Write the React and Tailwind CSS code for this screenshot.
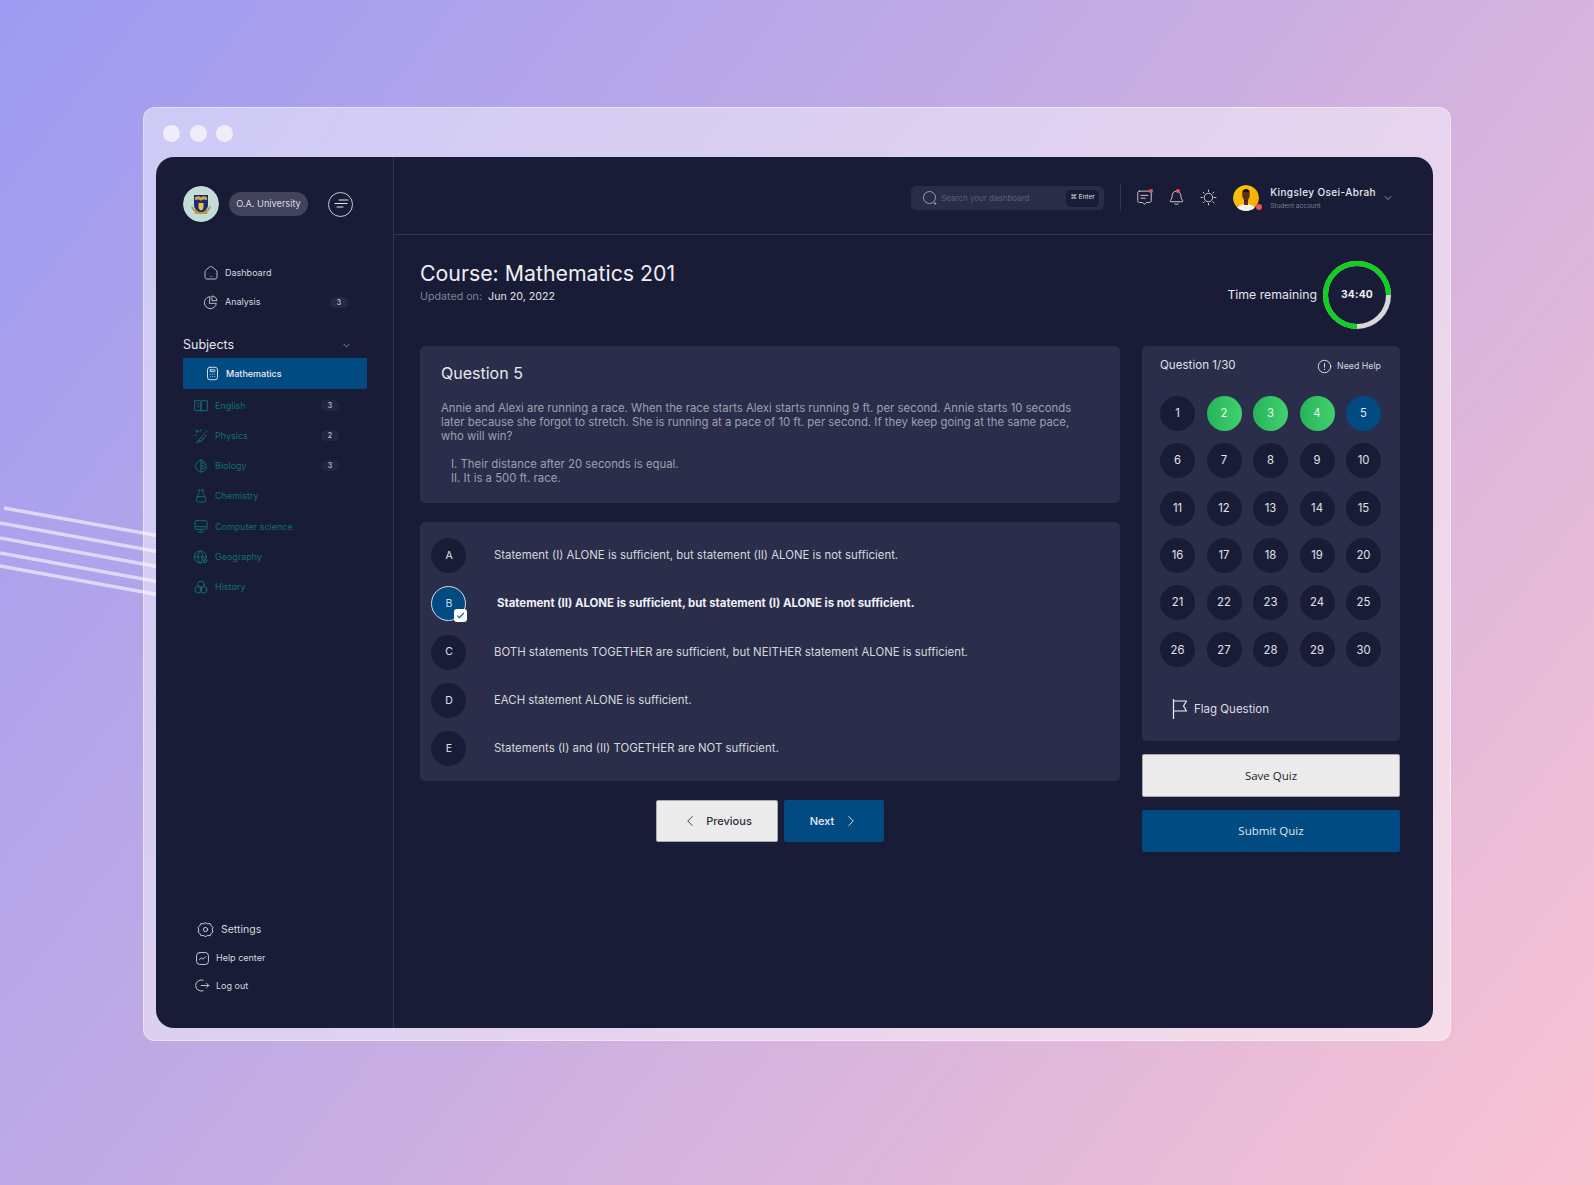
import React from "react";
import { ChevronDown, ChevronLeft, ChevronRight } from "lucide-react";

const S = ({ size = 14, className = "", children, vb = 24, sw = 1.5 }) => (
  <svg width={size} height={size} viewBox={`0 0 ${vb} ${vb}`} fill="none" stroke="currentColor" strokeWidth={sw} strokeLinecap="round" strokeLinejoin="round" className={`shrink-0 ${className}`}>
    {children}
  </svg>
);

const subjects = [
  ["English", 3, <><path d="M3 4h8c.7 0 1 .5 1 1v15c0-.6-.4-1-1-1H3z" /><path d="M21 4h-8c-.7 0-1 .5-1 1v15c0-.6.4-1 1-1h8z" /><path d="M6 9h3M6 13h3" /></>],
  ["Physics", 2, <><path d="M6 21 17 9l3 3-9 9-5 0z" /><path d="M9 18l3 2M12 14l3 3" /><circle cx="6" cy="5" r="1.6" /><circle cx="11" cy="3.500" r=".8" /><path d="M3 11h2M21 4l-3 3" /></>],
  ["Biology", 3, <><path d="M12 3c5 2 8 5 8 9 0 5-4 9-8 9s-8-4-8-9c0-4 3-7 8-9z" /><path d="M12 3v18M12 9l4-2M12 13l6-3M12 17l6-3" /></>],
  ["Chemistry", null, <><path d="M8 3h8M9 3v4c0 2-3 3-3 6M15 3v4c0 2 3 3 3 6" /><rect x="5" y="13" width="14" height="8" rx="3" /></>],
  ["Computer science", null, <><rect x="3" y="4" width="18" height="13" rx="2" /><path d="M3 13h18M12 17v3M8 21h8" /></>],
  ["Geography", null, <><circle cx="11" cy="12" r="9" /><path d="M2 12h18M11 3c-5 5-5 13 0 18M11 3c5 5 5 13 0 18" /><circle cx="18" cy="18" r="2.5" /></>],
  ["History", null, <><circle cx="12" cy="8" r="5" /><circle cx="8" cy="16" r="5" /><circle cx="16" cy="16" r="5" /></>],
];

const answers = [
  ["A", "Statement (I) ALONE is sufficient, but statement (II) ALONE is not sufficient."],
  ["B", "Statement (II) ALONE is sufficient, but statement (I) ALONE is not sufficient."],
  ["C", "BOTH statements TOGETHER are sufficient, but NEITHER statement ALONE is sufficient."],
  ["D", "EACH statement ALONE is sufficient."],
  ["E", "Statements (I) and (II) TOGETHER are NOT sufficient."],
];

function Crest() {
  return (
    <svg width="36" height="36" viewBox="0 0 36 36" className="rounded-full shrink-0">
      <circle cx="18" cy="18" r="18" fill="#c4dcd8" />
      <path d="M8 20c.5 3 2 5 4 6l6 1.500 6-1.500c2-1 3.500-3 4-6l-2.200 1c-.8 2-1.800 2.800-3.300 3H13.500c-1.500-.2-2.500-1-3.300-3z" fill="#b59a45" />
      <path d="M11 9h14v10c0 4-3.500 6.500-7 7.500-3.500-1-7-3.500-7-7.500z" fill="#1c2a78" />
      <path d="M12 11.500c2-1.700 4.500-1.700 6 0 1.500-1.700 4-1.700 6 0v2.700c-2-1-4.500-1-6 .8-1.500-1.800-4-1.800-6-.8z" fill="#d9a93c" />
      <path d="M15.500 17h5v4c0 1.800-1 2.800-2.500 3.500-1.500-.7-2.500-1.700-2.500-3.500z" fill="#f0c23a" />
      <rect x="11.500" y="26" width="13" height="2" rx="1" fill="#b59a45" />
    </svg>
  );
}

function Avatar() {
  return (
    <div className="relative w-[26px] h-[26px] shrink-0">
      <svg width="26" height="26" viewBox="0 0 26 26" className="rounded-full">
        <defs>
          <linearGradient id="av" x1="0" y1="0" x2="1" y2="1">
            <stop offset="0" stopColor="#fdc60f" />
            <stop offset="1" stopColor="#f6a800" />
          </linearGradient>
        </defs>
        <circle cx="13" cy="13" r="13" fill="url(#av)" />
        <path d="M3 26c1-5 5-7 10-7s9 2 10 7z" fill="#f4f1ee" />
        <rect x="11" y="14" width="4" height="6" fill="#5a2f1c" />
        <ellipse cx="13" cy="10" rx="3.8" ry="5.2" fill="#5f3119" />
        <path d="M9.3 8c0-3 1.5-4 3.7-4s3.700 1 3.700 4c-1-1.500-6.400-1.500-7.400 0z" fill="#1e120c" />
        <path d="M10.500 13.500c1 2.500 4 2.500 5 0l-.5 1.500-2 1.200-2-1.200z" fill="#1e120c" />
      </svg>
      <span className="absolute right-[-3px] bottom-[1px] w-[6px] h-[6px] rounded-full bg-[#ef4e5c]" />
    </div>
  );
}

function Badge({ n, className = "" }) {
  return <span className={`flex items-center justify-center w-[18px] h-[11px] rounded-full bg-[#252a3f] text-[7px] leading-none font-medium text-[#c4c6d0] ${className}`}>{n}</span>;
}

function Sidebar() {
  return (
    <aside className="w-[238px] shrink-0 h-full border-r border-[#33364f] pt-[29px] pl-[27px] flex flex-col">
      <div className="flex items-center h-[36px]">
        <Crest />
        <span className="ml-[10px] flex items-center justify-center w-[79px] h-[24px] rounded-full bg-[#40435a] text-[9.200px] text-[#dcdde3]">O.A. University</span>
        <span className="ml-[20px] flex items-center justify-center w-[25px] h-[25px] rounded-full border border-[#c9cad2] text-[#e6e6ea]">
          <svg width="16" height="10" viewBox="0 0 16 10" fill="none" stroke="currentColor" strokeWidth="1" strokeLinecap="round"><path d="M6 1h9M2 4.500h12M4 8h6" /></svg>
        </span>
      </div>

      <div className="mt-[36px] ml-[20px] flex items-center h-[30px] text-[9px] text-[#d7d8de]">
        <S size={16} className="mr-[6px] text-[#c6c7cf]" sw={1.4}><path d="M3 11c0-2 1-3 2-4l5-4c1-.8 3-.8 4 0l5 4c1 1 2 2 2 4v7c0 2-1 3-3 3H6c-2 0-3-1-3-3z" /><path d="M12 17v.5" /></S>
        Dashboard
      </div>
      <div className="ml-[20px] flex items-center h-[28px] w-[145px] text-[9px] text-[#d7d8de]">
        <S size={16} className="mr-[6px] text-[#c6c7cf]" sw={1.4}><path d="M10 4a9 9 0 1 0 10 10H10z" /><path d="M14 3a8 8 0 0 1 7 7h-7z" /></S>
        Analysis
        <Badge n={3} className="ml-auto" />
      </div>

      <div className="mt-[17px] flex items-center w-[184px] h-[25px] pr-[15px] text-[12.500px] text-[#e4e5ea]">
        Subjects
        <ChevronDown size={11} strokeWidth={1.5} className="ml-auto text-[#b5b6c0]" />
      </div>
      <div className="flex items-center w-[184px] h-[31px] pl-[22px] bg-[#024a82] rounded-[1px] text-[9px] font-medium text-[#e9edf3]">
        <S size={15} className="mr-[6px] text-[#dfe6ee]" sw={1.5}><rect x="4" y="2" width="16" height="20" rx="4" /><rect x="8" y="6" width="8" height="3" rx="1" /><path d="M8.500 13h.01M12 13h.01M15.500 13h.01M8.500 17h.01M12 17h.01M15.500 17h.01" /></S>
        Mathematics
      </div>
      <div className="mt-[1.500px]">
        {subjects.map(([name, n, icon]) => (
          <div key={name} className="flex items-center w-[156px] h-[30.200px] pl-[10px] text-[9px] text-[#0e7075]">
            <S size={16} className="mr-[6px] text-[#0e7075]" sw={1.4}>{icon}</S>
            {name}
            {n && <Badge n={n} className="ml-auto bg-[#20283f]" />}
          </div>
        ))}
      </div>

      <div className="mt-auto mb-[29px] ml-[14px]">
        <div className="flex items-center h-[30px] pt-[1px] text-[10.500px] text-[#d7d8de]">
          <S size={17} className="mr-[7px] text-[#d0d1d8]" sw={1.4}><circle cx="12" cy="12" r="3" /><path d="M12 2.500l3 1.500 3.500-.5 1.500 3 2.500 2.500-1 3.500 1 3-2.500 2-1.500 3.200-3.500-.2-3 1.500-3-1.500-3.500.2-1.500-3.200-2.500-2 1-3-1-3.500 2.500-2.500 1.500-3 3.500.5z" /></S>
          Settings
        </div>
        <div className="flex items-center h-[28px] text-[9px] text-[#d7d8de] -ml-[2px]">
          <S size={15} className="mr-[6px] text-[#d0d1d8]" sw={1.5}><rect x="2.500" y="2.500" width="19" height="19" rx="5" /><path d="M7 14l3-3 3 2 4-4" /></S>
          Help center
        </div>
        <div className="flex items-center h-[27px] text-[9px] text-[#d7d8de] -ml-[2px]">
          <S size={15} className="mr-[6px] text-[#d0d1d8]" sw={1.5}><path d="M13 3.500a9 9 0 1 0 0 17" /><path d="M10 12h12M18.500 8.500l3.500 3.500-3.500 3.500" /></S>
          Log out
        </div>
      </div>
    </aside>
  );
}

function TopBar() {
  return (
    <header className="h-[78px] border-b border-[#33364f] flex items-start justify-end pt-[27px] pr-[39px] shrink-0">
      <div className="mt-[2px] w-[193px] h-[24px] rounded-[5px] bg-[#292d48] flex items-center pl-[11px] pr-[5px]">
        <svg width="16" height="16" viewBox="0 0 16 16" fill="none" stroke="#9a9cab" strokeWidth="1"><circle cx="7.500" cy="7.500" r="6" /><circle cx="13" cy="13.500" r=".8" fill="#9a9cab" /></svg>
        <span className="ml-[3px] text-[8px] text-[#5d6076]">Search your dashboard</span>
        <span className="ml-auto flex items-center justify-center w-[33px] h-[17px] rounded-[5px] bg-[#191c37] text-[6.500px] font-medium text-[#c5c6d0]">⌘ Enter</span>
      </div>
      <div className="ml-[16px] w-px h-[27px] bg-[#33364f]" />
      <div className="relative ml-[15px] mt-[5px] text-[#c8c9d1]">
        <S size={17} sw={1.4}><path d="M5 3h14c1.500 0 2.500 1 2.500 2.500v11c0 1.500-1 2.500-2.500 2.500h-4l-3 2.500L9 19H5c-1.500 0-2.500-1-2.500-2.500v-11C2.500 4 3.500 3 5 3z" /><path d="M7 9h10M7 13h6" /></S>
        <span className="absolute top-0 right-0 w-[4px] h-[4px] rounded-full bg-[#ef4e5c]" />
      </div>
      <div className="relative ml-[15px] mt-[5px] text-[#c8c9d1]">
        <S size={17} sw={1.4}><path d="M12 3c-4 0-6 3-6 6 0 5-3 7-3 8 0 .6.500 1 1 1h16c.5 0 1-.4 1-1 0-1-3-3-3-8 0-3-2-6-6-6z" /><path d="M9.500 21c1.500 1 3.500 1 5 0" /></S>
        <span className="absolute top-0 right-[5px] w-[4px] h-[4px] rounded-full bg-[#ef4e5c]" />
      </div>
      <div className="ml-[15px] mt-[5px] text-[#c8c9d1]">
        <S size={17} sw={1.4}><circle cx="12" cy="12" r="6" /><path d="M12 1.500v2M12 20.500v2M1.500 12h2M20.500 12h2M4.500 4.500 6 6M18 18l1.500 1.500M4.500 19.500 6 18M18 6l1.500-1.500" /></S>
      </div>
      <div className="ml-[16px] mt-[1px]"><Avatar /></div>
      <div className="ml-[11px] mt-[1px] leading-none">
        <div className="text-[10px] leading-[14px] font-medium tracking-[0.4px] text-[#e9e9ee]">Kingsley Osei-Abrah</div>
        <div className="text-[6.500px] leading-[9px] mt-[3px] text-[#7d7f91]">Student account</div>
      </div>
      <ChevronDown size={12} strokeWidth={1.5} className="ml-[6px] mt-[8px] text-[#bfc0c9]" />
    </header>
  );
}

function Grid() {
  const cells = Array.from({ length: 30 }, (_, i) => i + 1);
  return (
    <div className="mt-[21px] ml-[18px] grid grid-cols-[repeat(5,35px)] gap-x-[11.500px] gap-y-[12.300px]">
      {cells.map((n) => {
        const tone =
          n >= 2 && n <= 4
            ? "bg-gradient-to-r from-[#26b45a] to-[#41d16f] text-[#ecfbf1]"
            : n === 5
            ? "bg-[#024a82] text-[#dfe8f1]"
            : "bg-[#191c37] text-[#e2e3e9]";
        return (
          <div key={n} className={`w-[35px] h-[35px] rounded-full flex items-center justify-center text-[11.300px] ${tone}`}>{n}</div>
        );
      })}
    </div>
  );
}

function QuizPanel() {
  return (
    <div className="w-[258px] shrink-0">
      <div className="h-[395px] rounded-[5px] bg-[#2a2e4b] pt-[11px]">
        <div className="flex items-center justify-between h-[18px] pl-[18px] pr-[19px]">
          <span className="text-[11.600px] text-[#dfe0e6]">Question 1/30</span>
          <span className="flex items-center text-[8.800px] text-[#d3d4db]">
            <S size={15} className="mr-[5px] text-[#e2e3e8]" sw={1.5}><circle cx="12" cy="12" r="10" /><path d="M12 7v6M12 16.500v.5" /></S>
            Need Help
          </span>
        </div>
        <Grid />
        <div className="mt-[32px] ml-[30px] flex items-center h-[20px] text-[11.500px] text-[#dcdde3]">
          <svg width="16" height="20" viewBox="0 0 16 20" fill="none" stroke="#eeeef2" strokeWidth="1.200" className="mr-[6px]"><path d="M1.500 0v20M1.500 2h13l-3 5 3 5h-13" strokeLinejoin="round" /></svg>
          Flag Question
        </div>
      </div>
      <button className="mt-[13px] w-full h-[43px] bg-[#ebebeb] rounded-[2px] border border-[#a9a9b4] text-[11.500px] text-[#22242f]" style={{ fontFamily: "Open Sans, sans-serif" }}>Save Quiz</button>
      <button className="mt-[13px] w-full h-[42px] bg-[#024a82] rounded-[2px] text-[11.500px] text-[#dfe8f1]" style={{ fontFamily: "Open Sans, sans-serif" }}>Submit Quiz</button>
    </div>
  );
}

function Main() {
  return (
    <main className="flex-1 min-w-0 flex flex-col">
      <TopBar />
      <div className="pl-[26px] pt-[25px] flex-1">
        <div className="flex items-start justify-between h-[86px] pr-[42px]">
          <div>
            <h1 className="text-[21.300px] leading-[27px] text-[#eeeef2]">Course: Mathematics 201</h1>
            <p className="text-[10.700px] leading-[14px] mt-[3px] text-[#7f8194]">Updated on: <span className="ml-[3px] text-[#e0e1e6]">Jun 20, 2022</span></p>
          </div>
          <div className="flex items-center mt-[1px]">
            <span className="text-[12.300px] text-[#e4e5ea] mr-[6px]">Time remaining</span>
            <div className="relative w-[68px] h-[68px]">
              <svg width="68" height="68" viewBox="0 0 68 68" fill="none" strokeWidth="5">
                <circle cx="34" cy="34" r="31.500" stroke="#d8d8d8" />
                <path d="M65.500 34A31.500 31.500 0 1 0 34 65.500" stroke="#10cf1f" />
              </svg>
              <span className="absolute inset-0 flex items-center justify-center text-[10.300px] font-bold text-[#eeeef2] tracking-[0.2px]">34:40</span>
            </div>
          </div>
        </div>
        <div className="flex gap-[22px] items-start">
          <div className="w-[700px] shrink-0">
            <section className="h-[157px] rounded-[5px] bg-[#2a2e4b] pt-[17px] pl-[21px] pr-[30px]">
              <h2 className="text-[16px] leading-[21px] text-[#e8e9ee]">Question 5</h2>
              <p className="mt-[17px] text-[11.350px] leading-[14px] text-[#9ea0b0]">Annie and Alexi are running a race. When the race starts Alexi starts running 9 ft. per second. Annie starts 10 seconds later because she forgot to stretch. She is running at a pace of 10 ft. per second. If they keep going at the same pace, who will win?</p>
              <p className="mt-[14px] pl-[10px] text-[11.350px] leading-[14px] text-[#9ea0b0]">I. Their distance after 20 seconds is equal.<br />II. It is a 500 ft. race.</p>
            </section>
            <section className="mt-[19px] h-[259px] rounded-[5px] bg-[#2a2e4b] pt-[16px] pl-[11px] flex flex-col gap-[13.300px]">
              {answers.map(([l, t]) => {
                const sel = l === "B";
                return (
                  <div key={l} className="flex items-center h-[35px]">
                    <div className={`relative w-[35px] h-[35px] shrink-0 rounded-full flex items-center justify-center pl-[1px] text-[10.500px] ${sel ? "bg-[#024a82] border border-[#d5dae3] text-[#cfdae6]" : "bg-[#191c37] text-[#e2e3e9]"}`}>
                      {l}
                      {sel && (
                        <span className="absolute -right-[2px] -bottom-[2px] w-[13px] h-[13px] rounded-[3px] bg-white flex items-center justify-center text-[#2a5f95]">
                          <S size={9} sw={3}><path d="M4 13l5 5 11-12" /></S>
                        </span>
                      )}
                    </div>
                    <span className={sel ? "ml-[31px] text-[11.400px] font-bold text-[#f0f0f4]" : "ml-[28px] text-[11.400px] text-[#d6d7de]"}>{t}</span>
                  </div>
                );
              })}
            </section>
            <div className="mt-[19px] flex justify-center gap-[6px] pr-[1px]">
              <button className="w-[122px] h-[42px] rounded-[2px] bg-[#ebebeb] border border-[#a9a9b4] flex items-center justify-center text-[11px] font-medium text-[#2c2e3d]">
                <ChevronLeft size={18} strokeWidth={1.2} className="mr-[7px]" />Previous
              </button>
              <button className="w-[100px] h-[42px] rounded-[2px] bg-[#024a82] flex items-center justify-center pl-[3px] text-[11px] font-medium text-[#e9edf3]">
                Next<ChevronRight size={18} strokeWidth={1.2} className="ml-[8px]" />
              </button>
            </div>
          </div>
          <QuizPanel />
        </div>
      </div>
    </main>
  );
}

export default function App() {
  return (
    <div className="relative w-[1594px] h-[1185px] overflow-hidden bg-[linear-gradient(128deg,#9d9bf2_0%,#c9aee2_50%,#f9c3d2_100%)] pt-[107px] pl-[143px]" style={{ fontFamily: "Inter, sans-serif" }}>
      <svg width="160" height="100" viewBox="0 0 160 100" className="absolute left-0 top-[505px]" stroke="#eeeafb" strokeWidth="3.500" opacity=".75">
        <path d="M4 3 160 31M0 18 160 47M0 33 160 62M0 48 160 77M0 61 160 90" />
      </svg>
      <div className="relative w-[1308px] h-[934px] rounded-[12px] bg-white/45 border border-white/40 pt-[49px] pl-[12px] flex flex-col">
        <div className="absolute top-[17px] left-[19px] flex gap-[9.500px]">
          <span className="w-[17px] h-[17px] rounded-full bg-[#f0edfb]" />
          <span className="w-[17px] h-[17px] rounded-full bg-[#f0edfb]" />
          <span className="w-[17px] h-[17px] rounded-full bg-[#f0edfb]" />
        </div>
        <div className="w-[1277px] h-[871px] rounded-[18px] bg-[#191c37] flex overflow-hidden">
          <Sidebar />
          <Main />
        </div>
      </div>
    </div>
  );
}
